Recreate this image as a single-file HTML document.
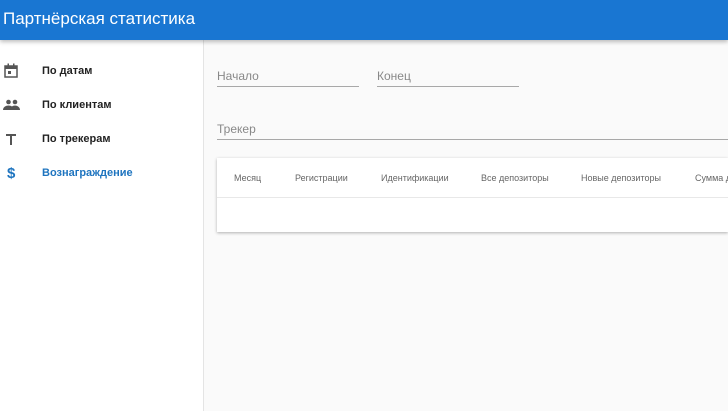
<!DOCTYPE html>
<html><head><meta charset="utf-8"><style>
*{box-sizing:border-box;margin:0;padding:0}
html,body{width:728px;height:411px;overflow:hidden}
body{font-family:"Liberation Sans","Noto Sans CJK SC",sans-serif;background:#fafafa;position:relative}
.hdr{position:absolute;left:0;top:0;width:728px;height:40px;background:#1976d2;color:#fff;font-size:17px;line-height:37px;padding-left:3px;box-shadow:0 2px 4px rgba(0,0,0,.25);z-index:2}
.side{position:absolute;left:0;top:40px;width:204px;height:371px;background:#fff;border-right:1px solid #e4e4e4}
.item{position:absolute;left:0;height:20px;width:200px;font-size:11px;color:#222;font-weight:bold}
.item span{position:absolute;left:42px;top:4px}
.item svg{position:absolute;left:3px;top:2px}
.lbl{position:absolute;font-size:12px;color:#888;}
.line{position:absolute;height:1px;background:#a8a8a8}
.card{position:absolute;left:217px;top:158px;width:511px;height:74px;background:#fff;box-shadow:0 1px 3px rgba(0,0,0,.3);overflow:hidden}
.card .sep{position:absolute;left:0;top:39px;width:100%;height:1px;background:#e8e8e8}
.th{position:absolute;top:15px;font-size:9px;color:#666;white-space:nowrap}
</style></head><body>
<div class="hdr">Партнёрская статистика</div>
<div class="side">
 <div class="item" style="top:21px"><svg width="16" height="16" viewBox="0 0 16 16"><rect x="2" y="3" width="12" height="11" fill="none" stroke="#555" stroke-width="1.5"/><rect x="2" y="3" width="12" height="3" fill="#555"/><rect x="4.5" y="0.5" width="1.5" height="3" fill="#555"/><rect x="10" y="0.5" width="1.5" height="3" fill="#555"/><rect x="5" y="8" width="3" height="3" fill="#555"/></svg><span>По датам</span></div>
 <div class="item" style="top:55px"><svg width="18" height="16" viewBox="0 0 18 16"><circle cx="5.5" cy="5" r="2.3" fill="#555"/><circle cx="12" cy="5" r="2.3" fill="#555"/><path d="M0 13c0-3 3-4.5 5.5-4.5S11 10 11 13z" fill="#555"/><path d="M7 13c0-3 3-4.5 5-4.5s5 1.5 5 4.5z" fill="#555"/></svg><span>По клиентам</span></div>
 <div class="item" style="top:89px"><svg width="16" height="16" viewBox="0 0 16 16"><path d="M3 3h10v2H9v9H7V5H3z" fill="#555"/></svg><span>По трекерам</span></div>
 <div class="item" style="top:123px;color:#1e74bf"><svg width="16" height="16" viewBox="0 0 16 16"><text x="4" y="13" font-size="15" font-weight="bold" fill="#1e74bf" font-family="Liberation Sans">$</text></svg><span>Вознаграждение</span></div>
</div>
<div class="lbl" style="left:217px;top:69px">Начало</div><div class="line" style="left:217px;top:86px;width:142px"></div>
<div class="lbl" style="left:377px;top:69px">Конец</div><div class="line" style="left:377px;top:86px;width:142px"></div>
<div class="lbl" style="left:217px;top:122px">Трекер</div><div class="line" style="left:217px;top:139px;width:511px"></div>
<div class="card">
 <div class="th" style="left:17px">Месяц</div>
 <div class="th" style="left:78px">Регистрации</div>
 <div class="th" style="left:164px">Идентификации</div>
 <div class="th" style="left:264px">Все депозиторы</div>
 <div class="th" style="left:364px">Новые депозиторы</div>
 <div class="th" style="left:478px">Сумма депозитов</div>
 <div class="sep"></div>
</div>
</body></html>
